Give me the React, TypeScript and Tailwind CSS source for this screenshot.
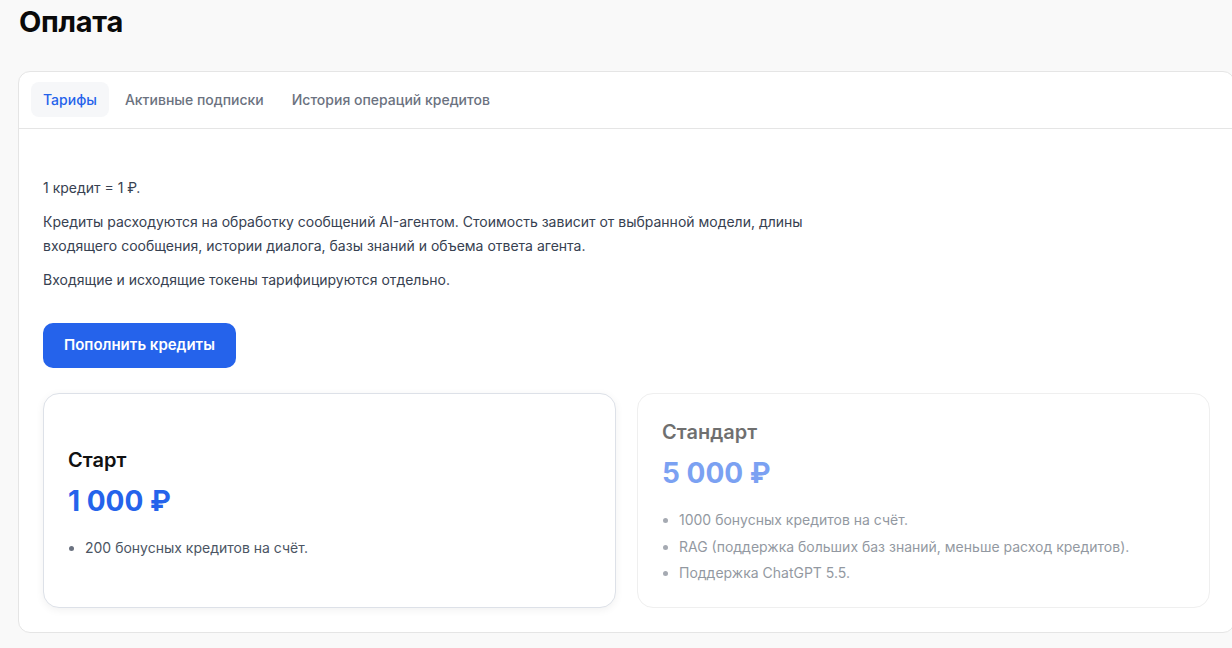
import React from 'react';

const tabs = ['Тарифы', 'Активные подписки', 'История операций кредитов'];

interface Plan {
  name: string;
  price: string;
  features: string[];
  active?: boolean;
}

const plans: Plan[] = [
  { name: 'Старт', price: '1 000 ₽', features: ['200 бонусных кредитов на счёт.'], active: true },
  {
    name: 'Стандарт',
    price: '5 000 ₽',
    features: [
      '1000 бонусных кредитов на счёт.',
      'RAG (поддержка больших баз знаний, меньше расход кредитов).',
      'Поддержка ChatGPT 5.5.',
    ],
  },
];

const PlanCard: React.FC<{ plan: Plan }> = ({ plan }) => {
  return (
    <div
      className={
        plan.active
          ? 'flex flex-col justify-center rounded-2xl border border-[#dde1e8] bg-white px-6 pt-[26px] pb-5 shadow-[0_2px_8px_rgba(0,0,0,0.06)]'
          : 'flex flex-col rounded-2xl border border-[#e5e5e5] bg-white px-6 pt-6 pb-5 opacity-60'
      }
    >
      <h3 className="text-[20px] leading-7 font-semibold text-[#111]">{plan.name}</h3>
      <div className="mt-[10px] text-[28px] leading-[34px] font-bold text-[#2563eb]">{plan.price}</div>
      <ul className="mt-[17px] list-disc pl-[17px] text-[14px] leading-[26.5px] text-[#4b5563] marker:text-[#6b7280]">
        {plan.features.map((f) => (
          <li key={f}>{f}</li>
        ))}
      </ul>
    </div>
  );
};

export default function App() {
  return (
    <div
      className="min-h-[648px] w-[1232px] overflow-hidden bg-[#f9f9f9] pb-4 pl-[18px]"
      style={{ fontFamily: "Inter, 'Noto Sans', sans-serif" }}
    >
      <h1 className="pt-[4px] pl-[1px] text-[29px] leading-9 font-bold tracking-[-0.01em] text-[#0a0a0a]">Оплата</h1>

      <div className="mt-[31px] w-[1217px] rounded-xl border border-[#e5e5e5] bg-white">
        {/* tabs */}
        <div className="flex gap-1 border-b border-[#e5e5e5] px-3 pt-[10px] pb-[11px]">
          {tabs.map((t, i) => (
            <button
              key={t}
              className={
                i === 0
                  ? 'h-[35px] rounded-lg bg-[#f6f7f9] px-3 text-[14px] font-medium text-[#2563eb]'
                  : 'h-[35px] rounded-lg px-3 text-[14px] font-medium text-[#6b7280]'
              }
            >
              {t}
            </button>
          ))}
        </div>

        {/* content */}
        <div className="px-6 pt-[47px] pb-6">
          <div className="max-w-[780px] space-y-[10px] text-[14px] leading-6 text-[#374151]">
            <p>1 кредит = 1 ₽.</p>
            <p>
              Кредиты расходуются на обработку сообщений AI-агентом. Стоимость зависит от выбранной модели, длины
              входящего сообщения, истории диалога, базы знаний и объема ответа агента.
            </p>
            <p>Входящие и исходящие токены тарифицируются отдельно.</p>
          </div>

          <button className="mt-[31px] h-[45px] rounded-[10px] bg-[#2563eb] px-[21px] text-[15px] font-semibold text-white">
            Пополнить кредиты
          </button>

          <div className="mt-[25px] grid grid-cols-2 gap-[21px]">
            {plans.map((p) => (
              <PlanCard key={p.name} plan={p} />
            ))}
          </div>
        </div>
      </div>
    </div>
  );
}
